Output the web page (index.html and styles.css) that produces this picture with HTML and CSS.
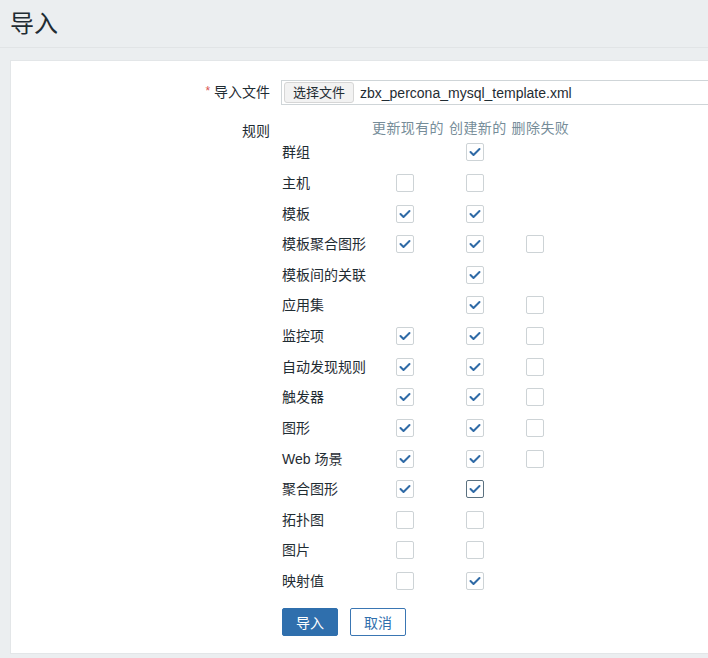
FILE: index.html
```html
<!DOCTYPE html>
<html lang="zh-CN">
<head>
<meta charset="utf-8">
<title>导入</title>
<link rel="stylesheet" href="styles.css">
</head>
<body>
<header class="page-header"><h1 class="page-title">导入</h1></header>
<main class="panel">
  <form class="form-grid">
    <div class="form-label file-label"><span class="req">*</span> 导入文件</div>
    <div class="file-box"><span class="file-btn">选择文件</span><span class="file-name">zbx_percona_mysql_template.xml</span></div>

    <div class="form-label rules-label">规则</div>
    <div class="rules">
      <div class="rules-head"><span>更新现有的</span><span>创建新的</span><span>删除失败</span></div>
      <div class="rules-grid" id="rules"></div>
      <div class="actions">
        <button type="button" class="btn btn-primary">导入</button>
        <button type="button" class="btn btn-secondary">取消</button>
      </div>
    </div>
  </form>
</main>
<script src="script.js"></script>
</body>
</html>
```
FILE: styles.css
```css
html, body {
  margin: 0;
  padding: 0;
}
body {
  background: #ebeef0;
  font-family: "Liberation Sans", "Noto Sans CJK SC", sans-serif;
  color: #1f2c33;
  font-size: 14px;
  overflow: hidden;
  height: 658px;
}
.page-header {
  height: 47px;
  border-bottom: 1px solid #e1e4e6;
}
.page-title {
  margin: 0;
  padding-left: 10px;
  font-size: 24px;
  font-weight: normal;
  line-height: 48px;
  color: #1f2c33;
}
.panel {
  margin: 12px 0 0 10px;
  background: #fff;
  border: 1px solid #e3e6e8;
  border-right: none;
  padding: 19px 0 17px 0;
}
.form-grid {
  display: grid;
  grid-template-columns: 259px 1fr;
  column-gap: 11px;
  row-gap: 14px;
  align-items: start;
}
.form-label {
  text-align: right;
  line-height: 18px;
}
.file-label {
  align-self: center;
}
.req {
  color: #d9534f;
  font-size: 12px;
  position: relative;
  top: -2px;
}
.rules-label {
  padding-top: 3px;
}
.file-box {
  height: 23px;
  border: 1px solid #cfd5d8;
  border-right: none;
  display: flex;
  align-items: center;
  padding-left: 2px;
  gap: 6px;
}
.file-btn {
  height: 19px;
  line-height: 19px;
  padding: 0 8px;
  background: #f2f2f2;
  border: 1px solid #d6d6d6;
  border-radius: 3px;
  font-size: 13px;
  color: #1f2c33;
}
.file-name {
  font-size: 14px;
  color: #1f2c33;
}
.rules {
  padding-left: 1px;
}
.rules-head {
  display: flex;
  gap: 5px;
  padding-left: 90px;
  line-height: 18px;
  color: #768d99;
  letter-spacing: 0.4px;
}
.rules-grid {
  display: grid;
  grid-template-columns: 88px 70px 70px 50px;
  grid-auto-rows: 30.64px;
  align-items: center;
}
.rule-name {
  line-height: 18px;
}
.cell {
  display: flex;
  justify-content: center;
  align-items: center;
}
.cb {
  width: 16px;
  height: 16px;
  border: 1px solid #cdd3d6;
  border-radius: 2px;
  background: #fff;
  display: flex;
  align-items: center;
  justify-content: center;
}
.cb svg {
  display: block;
}
.cb.focus {
  border-color: #5b7180;
}
.actions {
  display: flex;
  gap: 12px;
  margin-top: 12px;
}
.btn {
  height: 28px;
  width: 56px;
  border-radius: 2px;
  font-family: inherit;
  font-size: 14px;
  padding: 0;
  cursor: pointer;
}
.btn-primary {
  background: #2f6fad;
  border: 1px solid #2f6fad;
  color: #fff;
}
.btn-secondary {
  background: #fff;
  border: 1px solid #3a76b3;
  color: #2f6fad;
}
```
FILE: script.js
```js
var rows = [
  ["群组", null, 1, null],
  ["主机", 0, 0, null],
  ["模板", 1, 1, null],
  ["模板聚合图形", 1, 1, 0],
  ["模板间的关联", null, 1, null],
  ["应用集", null, 1, 0],
  ["监控项", 1, 1, 0],
  ["自动发现规则", 1, 1, 0],
  ["触发器", 1, 1, 0],
  ["图形", 1, 1, 0],
  ["Web 场景", 1, 1, 0],
  ["聚合图形", 1, 2, null],
  ["拓扑图", 0, 0, null],
  ["图片", 0, 0, null],
  ["映射值", 0, 1, null]
];
var check = '<svg width="12" height="10" viewBox="0 0 12 10"><polyline points="1.5,5 4.5,8 10.5,2" fill="none" stroke="#2f6aa6" stroke-width="2" stroke-linecap="round" stroke-linejoin="round"/></svg>';
var html = "";
rows.forEach(function (r) {
  html += '<div class="rule-name">' + r[0] + '</div>';
  for (var i = 1; i < 4; i++) {
    var v = r[i];
    if (v === null) { html += '<div class="cell"></div>'; continue; }
    var cls = "cb" + (v === 2 ? " focus" : "");
    html += '<div class="cell"><span class="' + cls + '">' + (v ? check : "") + '</span></div>';
  }
});
document.getElementById("rules").innerHTML = html;
```
